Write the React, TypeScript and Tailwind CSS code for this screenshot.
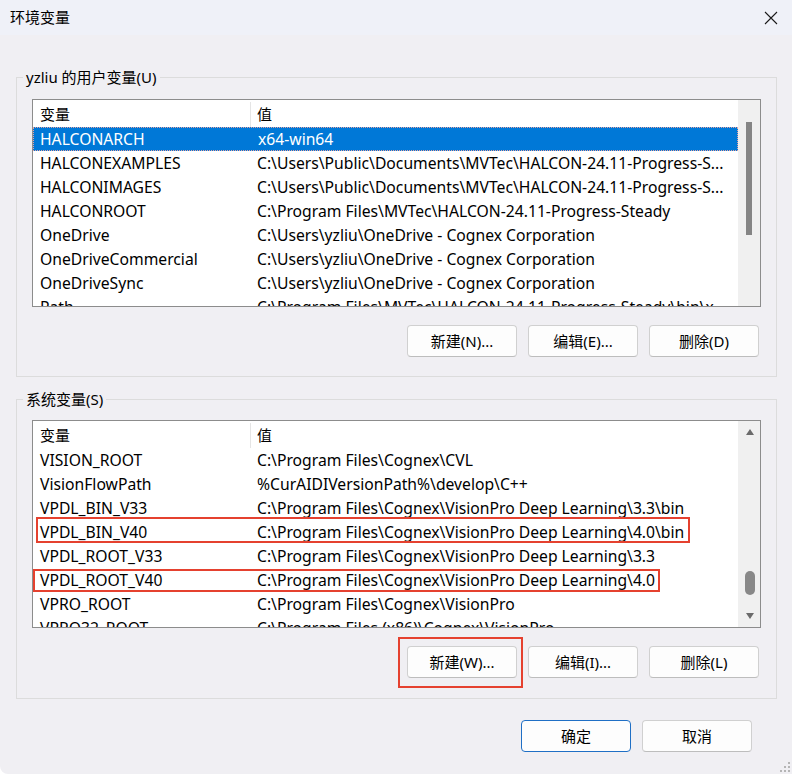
import React from "react";

type Row = { name: string; value: string };

const userRows: Row[] = [
  { name: "HALCONARCH", value: "x64-win64" },
  { name: "HALCONEXAMPLES", value: "C:\\Users\\Public\\Documents\\MVTec\\HALCON-24.11-Progress-S..." },
  { name: "HALCONIMAGES", value: "C:\\Users\\Public\\Documents\\MVTec\\HALCON-24.11-Progress-S..." },
  { name: "HALCONROOT", value: "C:\\Program Files\\MVTec\\HALCON-24.11-Progress-Steady" },
  { name: "OneDrive", value: "C:\\Users\\yzliu\\OneDrive - Cognex Corporation" },
  { name: "OneDriveCommercial", value: "C:\\Users\\yzliu\\OneDrive - Cognex Corporation" },
  { name: "OneDriveSync", value: "C:\\Users\\yzliu\\OneDrive - Cognex Corporation" },
  { name: "Path", value: "C:\\Program Files\\MVTec\\HALCON-24.11-Progress-Steady\\bin\\x..." },
];

const systemRows: Row[] = [
  { name: "VISION_ROOT", value: "C:\\Program Files\\Cognex\\CVL" },
  { name: "VisionFlowPath", value: "%CurAIDIVersionPath%\\develop\\C++" },
  { name: "VPDL_BIN_V33", value: "C:\\Program Files\\Cognex\\VisionPro Deep Learning\\3.3\\bin" },
  { name: "VPDL_BIN_V40", value: "C:\\Program Files\\Cognex\\VisionPro Deep Learning\\4.0\\bin" },
  { name: "VPDL_ROOT_V33", value: "C:\\Program Files\\Cognex\\VisionPro Deep Learning\\3.3" },
  { name: "VPDL_ROOT_V40", value: "C:\\Program Files\\Cognex\\VisionPro Deep Learning\\4.0" },
  { name: "VPRO_ROOT", value: "C:\\Program Files\\Cognex\\VisionPro" },
  { name: "VPRO32_ROOT", value: "C:\\Program Files (x86)\\Cognex\\VisionPro" },
];

function Btn({ label, primary }: { label: string; primary?: boolean }) {
  return (
    <button
      className={[
        "h-[32px] w-[110px] rounded-[4px] bg-[#fdfdfd] text-[15px] text-black",
        primary ? "border border-[#1f6fc5]" : "border border-[#d0d0d0] border-b-[#bdbdbd]",
      ].join(" ")}
    >
      {label}
    </button>
  );
}

function Header() {
  return (
    <div className="flex h-[27px] shrink-0 items-center pt-[2px] text-[15px]">
      <div className="w-[217px] pl-[7px]">变量</div>
      <div className="h-full w-px bg-[#e5e5e5]" />
      <div className="pl-[6px]">值</div>
    </div>
  );
}

function ListRow({
  row,
  selected,
  mark,
}: {
  row: Row;
  selected?: boolean;
  mark?: "bin" | "root";
}) {
  return (
    <div
      className={[
        "relative flex h-[24px] shrink-0 items-center whitespace-nowrap pt-[1px] text-[15.7px]",
        selected ? "border border-dotted border-[#e3a3a3] bg-[#0078d7] text-white" : "text-black",
      ].join(" ")}
    >
      <div className={selected ? "w-[217px] pl-[6px]" : "w-[217px] pl-[7px]"}>{row.name}</div>
      <div className="pl-[7px]">{row.value}</div>
      {mark === "bin" && (
        <div className="absolute left-[3px] top-[-3px] h-[26px] w-[654px] border-2 border-[#e5412f]" />
      )}
      {mark === "root" && (
        <div className="absolute left-0 top-[1px] h-[23px] w-[627px] border-2 border-[#e5412f]" />
      )}
    </div>
  );
}

function UserScrollbar() {
  return (
    <div className="flex w-[22px] shrink-0 flex-col bg-[#f0f0f0] pt-[22px]">
      <div className="ml-[8px] h-[113px] w-[6px] bg-[#858585]" />
    </div>
  );
}

function SystemScrollbar() {
  return (
    <div className="flex w-[22px] shrink-0 flex-col items-center bg-[#f0f0f0]">
      <svg width="10" height="8" viewBox="0 0 10 8" className="mt-[7px] ml-[1px]">
        <path d="M1 7 L5 1 L9 7 Z" fill="#6b6b6b" />
      </svg>
      <div className="mt-[135px] ml-[2px] h-[24px] w-[10px] rounded-full bg-[#888888]" />
      <svg width="10" height="8" viewBox="0 0 10 8" className="mt-[17px] ml-[1px]">
        <path d="M1 1 L9 1 L5 7 Z" fill="#6b6b6b" />
      </svg>
    </div>
  );
}

function VarList({ rows, system }: { rows: Row[]; system?: boolean }) {
  return (
    <div className="flex h-[208px] w-[729px] overflow-hidden border border-[#8c8c8c] bg-white">
      <div className="flex min-w-0 flex-1 flex-col overflow-hidden">
        <Header />
        {rows.map((r, i) => (
          <ListRow
            key={r.name}
            row={r}
            selected={!system && i === 0}
            mark={
              system && r.name === "VPDL_BIN_V40"
                ? "bin"
                : system && r.name === "VPDL_ROOT_V40"
                  ? "root"
                  : undefined
            }
          />
        ))}
      </div>
      {system ? <SystemScrollbar /> : <UserScrollbar />}
    </div>
  );
}

function Group({ title, children, className }: { title: string; children: React.ReactNode; className: string }) {
  return (
    <div className={"relative mx-[16px] w-[761px] border border-[#dcdcdc] px-[15px] " + className}>
      <span className="absolute left-[6px] top-[-11px] bg-[#f0eff3] px-[3px] text-[15px] leading-[20px]">
        {title}
      </span>
      {children}
    </div>
  );
}

export default function App() {
  return (
    <div
      className="relative flex h-[774px] w-[792px] flex-col overflow-hidden rounded-bl-[8px] bg-[#f0eff3] text-black"
      style={{ fontFamily: '"Noto Sans", "Noto Sans CJK SC", sans-serif' }}
    >
      {/* title bar */}
      <div className="flex h-[35px] shrink-0 items-center justify-between bg-[#eff1f8] pl-[10px] pr-[14px]">
        <span className="text-[15px]">环境变量</span>
        <svg width="14" height="14" viewBox="0 0 14 14">
          <path d="M1 1 L13 13 M13 1 L1 13" stroke="#1a1a1a" strokeWidth="1.1" />
        </svg>
      </div>

      {/* user variables */}
      <Group title="yzliu 的用户变量(U)" className="mt-[42px] pt-[21px] pb-[19px]">
        <VarList rows={userRows} />
        <div className="mt-[18px] flex justify-end gap-[11px] pr-[2px]">
          <Btn label="新建(N)..." />
          <Btn label="编辑(E)..." />
          <Btn label="删除(D)" />
        </div>
      </Group>

      {/* system variables */}
      <Group title="系统变量(S)" className="mt-[22px] pt-[20px] pb-[20px]">
        <VarList rows={systemRows} system />
        <div className="mt-[18px] flex justify-end gap-[11px] pr-[2px]">
          <div className="relative">
            <Btn label="新建(W)..." />
            <div className="absolute left-[-9px] top-[-9px] h-[51px] w-[125px] border-2 border-[#e5412f]" />
          </div>
          <Btn label="编辑(I)..." />
          <Btn label="删除(L)" />
        </div>
      </Group>

      {/* dialog buttons */}
      <div className="mt-[21px] flex justify-end gap-[11px] pr-[40px]">
        <Btn label="确定" primary />
        <Btn label="取消" />
      </div>

      {/* resize grip */}
      <svg width="12" height="12" viewBox="0 0 12 12" className="absolute bottom-[1px] right-[1px]">
        {[
          [9, 1], [9, 5], [5, 5], [9, 9], [5, 9], [1, 9],
        ].map(([x, y], i) => (
          <rect key={i} x={x} y={y} width="2" height="2" fill="#b5b5b5" />
        ))}
      </svg>
    </div>
  );
}
